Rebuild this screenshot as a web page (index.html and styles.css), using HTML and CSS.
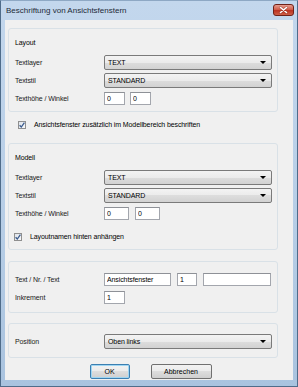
FILE: index.html
```html
<!DOCTYPE html>
<html lang="de">
<head>
    <meta charset="UTF-8">
    <title>Beschriftung von Ansichtsfenstern</title>
    <link rel="stylesheet" href="styles.css">
</head>
<body>
<div class="Window">
    <div class="TitleBar">
        <span class="TitleText">Beschriftung von Ansichtsfenstern</span>
        <svg class="CloseButton" width="21" height="12" viewBox="0 0 21 12">
            <defs>
                <linearGradient id="closeFill" x1="0" y1="0" x2="0" y2="1">
                    <stop offset="0" stop-color="#e9a396"/>
                    <stop offset="0.45" stop-color="#d2604d"/>
                    <stop offset="0.55" stop-color="#bb3322"/>
                    <stop offset="1" stop-color="#d0634a"/>
                </linearGradient>
            </defs>
            <rect x="0.5" y="0.5" width="20" height="11" rx="2.5" fill="url(#closeFill)" stroke="#6e2219"/>
            <path d="M7.5 3.5 L13.5 8.5 M13.5 3.5 L7.5 8.5" stroke="#5a1a12" stroke-width="2.6" stroke-linecap="round" opacity="0.35"/>
            <path d="M7.5 3.5 L13.5 8.5 M13.5 3.5 L7.5 8.5" stroke="#fff" stroke-width="1.6" stroke-linecap="round"/>
        </svg>
    </div>

    <div class="Client">
        <!--Layout-->
        <div class="Group">
            <div class="GroupHead">Layout</div>
            <div class="Row">
                <span class="RowLabel">Textlayer</span>
                <div class="Combo"><span>TEXT</span><span class="Arrow"></span></div>
            </div>
            <div class="Row">
                <span class="RowLabel">Textstil</span>
                <div class="Combo"><span>STANDARD</span><span class="Arrow"></span></div>
            </div>
            <div class="Row">
                <span class="RowLabel">Texth&ouml;he / Winkel</span>
                <input class="Field SmallA" type="text" value="0">
                <input class="Field SmallA" type="text" value="0">
            </div>
        </div>

        <label class="CheckRow OuterCheck">
            <span class="CheckBox">
                <svg width="8" height="8" viewBox="0 0 8 8"><path d="M1.6 4.2 L3.3 6 L6.4 1.6" fill="none" stroke="#3a5a8c" stroke-width="1.3"/></svg>
            </span>
            <span>Ansichtsfenster zus&auml;tzlich im Modellbereich beschriften</span>
        </label>

        <!--Modell-->
        <div class="Group ModelGroup">
            <div class="GroupHead">Modell</div>
            <div class="Row">
                <span class="RowLabel">Textlayer</span>
                <div class="Combo"><span>TEXT</span><span class="Arrow"></span></div>
            </div>
            <div class="Row">
                <span class="RowLabel">Textstil</span>
                <div class="Combo"><span>STANDARD</span><span class="Arrow"></span></div>
            </div>
            <div class="Row">
                <span class="RowLabel">Texth&ouml;he / Winkel</span>
                <input class="Field SmallB" type="text" value="0">
                <input class="Field SmallB" type="text" value="0">
            </div>
            <label class="CheckRow InnerCheck">
                <span class="CheckBox">
                    <svg width="8" height="8" viewBox="0 0 8 8"><path d="M1.6 4.2 L3.3 6 L6.4 1.6" fill="none" stroke="#3a5a8c" stroke-width="1.3"/></svg>
                </span>
                <span>Layoutnamen hinten anh&auml;ngen</span>
            </label>
        </div>

        <!--Nummerierung-->
        <div class="Group NumberGroup">
            <div class="Row">
                <span class="RowLabel">Text / Nr. / Text</span>
                <input class="Field PrefixField" type="text" value="Ansichtsfenster">
                <input class="Field NumberField" type="text" value="1">
                <input class="Field SuffixField" type="text" value="">
            </div>
            <div class="Row">
                <span class="RowLabel">Inkrement</span>
                <input class="Field SmallA" type="text" value="1">
            </div>
        </div>

        <!--Position-->
        <div class="Group PositionGroup">
            <div class="Row">
                <span class="RowLabel">Position</span>
                <div class="Combo"><span>Oben links</span><span class="Arrow"></span></div>
            </div>
        </div>

        <div class="DialogButtons">
            <button class="DialogButton DefaultButton" type="button">OK</button>
            <button class="DialogButton CancelButton" type="button">Abbrechen</button>
        </div>
    </div>
</div>
</body>
</html>
```

FILE: styles.css
```css
body {
    margin: 0;
    font-family: "Liberation Sans", Arial, sans-serif;
    font-size: 7px;
    letter-spacing: -0.1px;
    color: #000;
}

.Window {
    width: 298px;
    height: 387px;
    box-sizing: border-box;
    display: flex;
    flex-direction: column;
    padding: 0 4px 6px 4px;
    background: linear-gradient(#c3d7ed, #b6cde6 60%, #a9c3df);
    border: 1px solid #4f6c8a;
    border-top-color: #8ea8c4;
}

.TitleBar {
    height: 19px;
    display: flex;
    justify-content: space-between;
}

.TitleText {
    padding-left: 1px;
    line-height: 19px;
    font-size: 8px;
    letter-spacing: 0;
    color: #1e2b38;
}

.CloseButton {
    flex: none;
    margin-top: 3px;
    margin-right: -1px;
}

.Client {
    flex: 1;
    background: #f0f0f0;
    padding: 8px 0 0 3px;
}

.Group {
    width: 270px;
    box-sizing: border-box;
    border: 1px solid #d9e1e7;
    border-radius: 3px;
    padding: 8px 0 4px 6px;
}

.GroupHead {
    height: 12px;
    line-height: 12px;
    margin-bottom: 4px;
}

.Row {
    height: 18px;
    display: flex;
    align-items: center;
}

.RowLabel {
    width: 89px;
    flex: none;
    color: #1a1a1a;
}

.Combo {
    width: 168px;
    height: 15px;
    box-sizing: border-box;
    display: flex;
    align-items: center;
    justify-content: space-between;
    padding: 0 5px 0 3px;
    border: 1px solid #7a7a7a;
    border-radius: 2px;
    background: linear-gradient(#f3f3f3, #ebebeb 50%, #dddddd 50%, #d2d2d2);
}

.Combo .Arrow {
    width: 0;
    height: 0;
    border-left: 3px solid transparent;
    border-right: 3px solid transparent;
    border-top: 3px solid #000;
}

.Field {
    height: 13px;
    box-sizing: border-box;
    margin: 0 6px 0 0;
    padding: 0 0 0 2px;
    border: 1px solid #a3a6ad;
    border-top-color: #8e9197;
    background: #fff;
    font-family: "Liberation Sans", Arial, sans-serif;
    font-size: 7px;
    letter-spacing: -0.1px;
    color: #000;
    outline: none;
}

.SmallA {
    width: 21px;
    margin-right: 5px;
}

.SmallB {
    width: 25px;
}

.PrefixField {
    width: 67px;
}

.NumberField {
    width: 20px;
}

.SuffixField {
    width: 68px;
}

.CheckRow {
    height: 13px;
    display: flex;
    align-items: center;
}

.CheckBox {
    width: 8px;
    height: 8px;
    box-sizing: border-box;
    margin-right: 8px;
    display: flex;
    border: 1px solid #8f8f8f;
    background: linear-gradient(135deg, #dfe4ea, #f7f8f9);
}

.CheckBox svg {
    margin: -1px;
}

.OuterCheck {
    margin: 6px 0 12px 10px;
}

.InnerCheck {
    margin: 8px 0 2px -1px;
}

.ModelGroup {
    margin-bottom: 11px;
}

.NumberGroup {
    padding: 8px 0 6px 6px;
    margin-bottom: 10px;
}

.PositionGroup {
    padding: 8px 0 7px 6px;
}

.DialogButtons {
    margin-top: 6px;
    display: flex;
    justify-content: center;
    gap: 21px;
}

.DialogButton {
    height: 15px;
    box-sizing: border-box;
    padding: 0;
    border: 1px solid #707070;
    border-radius: 2px;
    background: linear-gradient(#f2f2f2, #ebebeb 50%, #dddddd 50%, #cfcfcf);
    font-family: "Liberation Sans", Arial, sans-serif;
    font-size: 7px;
    color: #000;
}

.DefaultButton {
    width: 40px;
    border-color: #3c7fb1;
    box-shadow: inset 0 0 0 1px #9fd6f3;
}

.CancelButton {
    width: 61px;
}
```
